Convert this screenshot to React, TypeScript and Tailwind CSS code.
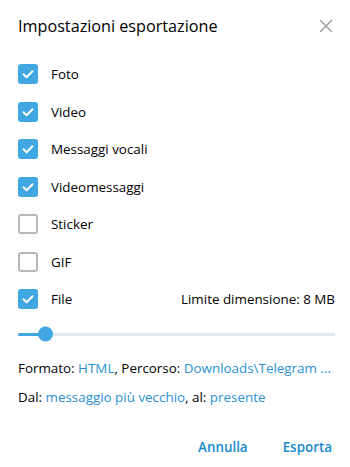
const options = [
  { label: 'Foto', checked: true },
  { label: 'Video', checked: true },
  { label: 'Messaggi vocali', checked: true },
  { label: 'Videomessaggi', checked: true },
  { label: 'Sticker', checked: false },
  { label: 'GIF', checked: false },
];

function Checkbox({ checked }: { checked: boolean }) {
  if (!checked) {
    return <div className="w-5 h-5 rounded-[3px] border-2 border-[#b8b8b8] bg-white shrink-0" />;
  }
  return (
    <div className="w-5 h-5 rounded-[3px] bg-[#40a7e3] flex items-center justify-center shrink-0">
      <svg width="20" height="20" viewBox="0 0 20 20" fill="none">
        <path d="M5.5 10.3 L8.6 13.2 L14.5 7.2" stroke="white" strokeWidth="2" strokeLinecap="round" strokeLinejoin="round" />
      </svg>
    </div>
  );
}

function Row({ label, checked, right }: { label: string; checked: boolean; right?: string }) {
  return (
    <div className="h-[37.5px] flex items-center pl-[18px] pr-[15px]">
      <Checkbox checked={checked} />
      <span className="ml-[13px] text-[13.4px] text-black">{label}</span>
      {right && <span className="ml-auto text-[13.4px] text-black">{right}</span>}
    </div>
  );
}

export default function App() {
  return (
    <div className="w-[350px] h-[467px] bg-white font-['Open_Sans',sans-serif] flex flex-col">
      {/* Header */}
      <div className="flex items-center justify-between pl-[18px] pr-[17px] pt-[14px] h-[38px]">
        <h1 className="text-[16.2px] font-medium text-black leading-6">Impostazioni esportazione</h1>
        <svg width="14" height="14" viewBox="0 0 14 14" className="text-[#9a9a9a]">
          <path d="M1 1 L13 13 M13 1 L1 13" stroke="currentColor" strokeWidth="1.4" />
        </svg>
      </div>

      {/* Options */}
      <div className="mt-[17.5px]">
        {options.map((o) => (
          <Row key={o.label} label={o.label} checked={o.checked} />
        ))}
        <Row label="File" checked right="Limite dimensione: 8 MB" />
      </div>

      {/* Size slider */}
      <div className="h-8 flex items-center pl-[18px] pr-[15px]">
        <div className="relative w-full h-[3px] rounded-full bg-[#e1eaef]">
          <div className="absolute left-0 top-0 h-full w-[28px] rounded-full bg-[#40a7e3]" />
          <div className="absolute left-[20px] top-1/2 -translate-y-1/2 w-[15px] h-[15px] rounded-full bg-[#40a7e3]" />
        </div>
      </div>

      {/* Info */}
      <div className="mt-[4px] px-[18px] text-[13.4px] leading-[29px] text-black">
        <div className="whitespace-nowrap">
          Formato: <span className="text-[#2a8fd4]">HTML</span>, Percorso:{' '}
          <span className="text-[#2a8fd4]">Downloads\Telegram ...</span>
        </div>
        <div>
          Dal: <span className="text-[#2a8fd4]">messaggio più vecchio</span>, al:{' '}
          <span className="text-[#2a8fd4]">presente</span>
        </div>
      </div>

      {/* Buttons */}
      <div className="mt-[15px] h-10 flex items-center justify-end gap-[35px] pr-[18px]">
        <button className="text-[13.4px] font-semibold text-[#168acd]">Annulla</button>
        <button className="text-[13.4px] font-semibold text-[#168acd]">Esporta</button>
      </div>
    </div>
  );
}
